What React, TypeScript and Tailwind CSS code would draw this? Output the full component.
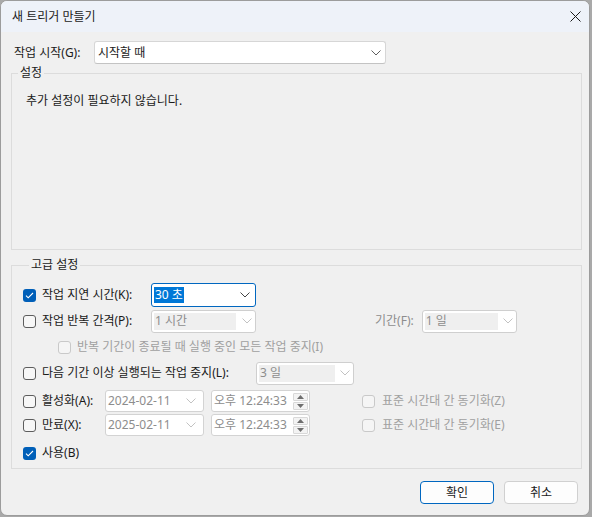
import React from "react";

const Chevron = ({ color = "#5f5f5f" }: { color?: string }) => (
  <svg width="10" height="6" viewBox="0 0 10 6" fill="none">
    <path d="M0.5 0.5 L5 5 L9.5 0.5" stroke={color} strokeWidth="1" />
  </svg>
);

const Checkbox = ({ checked = false, disabled = false }: { checked?: boolean; disabled?: boolean }) => {
  if (checked) {
    return (
      <span className="flex h-[13px] w-[13px] shrink-0 items-center justify-center rounded-[3px] bg-[#005fb8]">
        <svg width="9" height="7" viewBox="0 0 9 7" fill="none">
          <path d="M1 3.6 L3.2 5.8 L8 1" stroke="white" strokeWidth="1.1" />
        </svg>
      </span>
    );
  }
  return (
    <span
      className={
        disabled
          ? "h-[13px] w-[13px] shrink-0 rounded-[3px] border border-[#c9c9c9] bg-[#f5f5f5]"
          : "h-[13px] w-[13px] shrink-0 rounded-[3px] border border-[#5d5d5d] bg-[#f7f7f7]"
      }
    />
  );
};

// combobox that is greyed out: grey field on the left, white strip with the chevron
const DisabledCombo = ({ value, width, field }: { value: string; width: string; field: string }) => (
  <div className={`flex h-[23px] items-center rounded-[3px] border border-[#cfcfcf] bg-white ${width}`}>
    <div className={`ml-[2px] flex h-[17px] items-center bg-[#efefef] pl-[1px] text-[#8d8d8d] ${field}`}>{value}</div>
    <div className="flex flex-1 justify-center pl-[2px]">
      <Chevron color="#c2c2c2" />
    </div>
  </div>
);

const DateField = ({ value }: { value: string }) => (
  <div className="flex h-[22px] w-[99px] items-center justify-between rounded-[3px] border border-[#d3d3d3] bg-white pl-[2px] pr-[7px] text-[#8d8d8d]">
    <span>{value}</span>
    <Chevron color="#c2c2c2" />
  </div>
);

const SpinButton = ({ up }: { up?: boolean }) => (
  <span className="flex h-[8px] w-[15px] items-center justify-center rounded-[1px] border border-[#d8d8d8] bg-[#f3f3f3]">
    <svg width="7" height="4" viewBox="0 0 7 4">
      <path d={up ? "M0 4 L3.5 0 L7 4 Z" : "M0 0 L3.5 4 L7 0 Z"} fill="#6e6e6e" />
    </svg>
  </span>
);

const TimeField = ({ value }: { value: string }) => (
  <div className="flex h-[22px] w-[99px] items-center justify-between rounded-[3px] border border-[#d3d3d3] bg-white pl-[2px] pr-[1px] text-[#8d8d8d]">
    <span>{value}</span>
    <span className="flex flex-col gap-[1px]">
      <SpinButton up />
      <SpinButton />
    </span>
  </div>
);

export default function App() {
  return (
    <div className="h-[517px] w-[592px] bg-[#a9a9a9] font-['Noto_Sans','Noto_Sans_CJK_KR',sans-serif] text-[12px] leading-[16px] text-[#1a1a1a]">
      <div className="flex h-[516px] w-[590px] flex-col overflow-hidden rounded-[7px] border border-[#9c9c9c] bg-[#f0f0f0]">
        {/* title bar */}
        <div className="flex h-[31px] shrink-0 items-center justify-between bg-[#eef2f9] pl-[11px] pr-[8px]">
          <span>새 트리거 만들기</span>
          <svg width="11" height="11" viewBox="0 0 11 11" fill="none">
            <path d="M0.5 0.5 L10.5 10.5 M10.5 0.5 L0.5 10.5" stroke="#1a1a1a" strokeWidth="1" />
          </svg>
        </div>

        {/* begin the task */}
        <div className="mt-[9px] flex h-[23px] items-center pl-[13px]">
          <span className="w-[80px]">작업 시작(G):</span>
          <div className="flex h-[23px] w-[292px] items-center justify-between rounded-[3px] border border-[#d6d6d6] border-b-[#c3c3c3] bg-white pl-[3px] pr-[4px]">
            <span>시작할 때</span>
            <Chevron />
          </div>
        </div>

        {/* settings */}
        <fieldset className="ml-[10px] mt-[1px] h-[185px] w-[571px] border border-[#dcdcdc]">
          <legend className="ml-[6px] px-[2px]">설정</legend>
          <p className="mt-[12px] pl-[14px]">추가 설정이 필요하지 않습니다.</p>
        </fieldset>

        {/* advanced settings */}
        <fieldset className="ml-[10px] mt-[7px] w-[571px] border border-[#dcdcdc] pb-[3px] pl-[11px]">
          <legend className="ml-[6px] px-[2px]">고급 설정</legend>

          <div className="mt-[10px] flex h-[24px] items-center">
            <Checkbox checked />
            <span className="ml-[6px] w-[109px]">작업 지연 시간(K):</span>
            <div className="flex h-[24px] w-[105px] items-center justify-between rounded-[3px] border border-[#0067c0] bg-white pl-[2px] pr-[5px]">
              <span className="bg-[#0078d7] px-[1px] text-white">30 초</span>
              <Chevron color="#444444" />
            </div>
          </div>

          <div className="mt-[2px] flex h-[24px] items-center">
            <Checkbox />
            <span className="ml-[6px] w-[109px]">작업 반복 간격(P):</span>
            <DisabledCombo value="1 시간" width="w-[105px]" field="w-[82px]" />
            <span className="ml-[119px] text-[#8d8d8d]">기간(F):</span>
            <div className="ml-[8px]">
              <DisabledCombo value="1 일" width="w-[95px]" field="w-[73px]" />
            </div>
          </div>

          <div className="mt-[2px] flex h-[24px] items-center pl-[35px]">
            <Checkbox disabled />
            <span className="ml-[6px] text-[#a0a0a0]">반복 기간이 종료될 때 실행 중인 모든 작업 중지(I)</span>
          </div>

          <div className="mt-[2px] flex h-[24px] items-center">
            <Checkbox />
            <span className="ml-[6px] w-[214px]">다음 기간 이상 실행되는 작업 중지(L):</span>
            <DisabledCombo value="3 일" width="w-[98px]" field="w-[76px]" />
          </div>

          <div className="mt-[4px] flex h-[24px] items-center">
            <Checkbox />
            <span className="ml-[6px] w-[63px]">활성화(A):</span>
            <DateField value="2024-02-11" />
            <div className="ml-[7px]">
              <TimeField value="오후 12:24:33" />
            </div>
            <div className="ml-[52px] flex items-center">
              <Checkbox disabled />
              <span className="ml-[7px] text-[#a0a0a0]">표준 시간대 간 동기화(Z)</span>
            </div>
          </div>

          <div className="flex h-[24px] items-center">
            <Checkbox />
            <span className="ml-[6px] w-[63px]">만료(X):</span>
            <DateField value="2025-02-11" />
            <div className="ml-[7px]">
              <TimeField value="오후 12:24:33" />
            </div>
            <div className="ml-[52px] flex items-center">
              <Checkbox disabled />
              <span className="ml-[7px] text-[#a0a0a0]">표준 시간대 간 동기화(E)</span>
            </div>
          </div>

          <div className="mt-[4px] flex h-[24px] items-center">
            <Checkbox checked />
            <span className="ml-[6px]">사용(B)</span>
          </div>
        </fieldset>

        {/* dialog buttons */}
        <div className="mt-[12px] flex justify-end gap-[10px] pr-[11px]">
          <button className="flex h-[23px] w-[74px] items-center justify-center rounded-[4px] border border-[#0067c0] bg-[#fdfdfd]">
            확인
          </button>
          <button className="flex h-[23px] w-[74px] items-center justify-center rounded-[4px] border border-[#d0d0d0] bg-[#fdfdfd]">
            취소
          </button>
        </div>
      </div>
    </div>
  );
}
